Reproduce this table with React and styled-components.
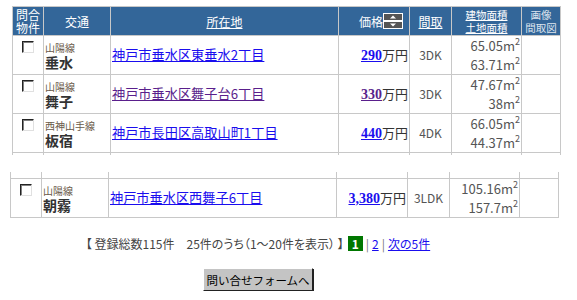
import React from "react";
import styled, { createGlobalStyle } from "styled-components";

const GlobalStyle = createGlobalStyle`
  body {
    margin: 0;
    background: #fff;
    font-family: "Noto Sans CJK JP", "Noto Sans", sans-serif;
  }
`;

const COLS = [31, 67, 228, 71, 42, 70, 39];

const listings = [
  { line: "山陽線", station: "垂水", address: "神戸市垂水区東垂水2丁目", price: "290", madori: "3DK", building: "65.05", land: "63.71" },
  { line: "山陽線", station: "舞子", address: "神戸市垂水区舞子台6丁目", price: "330", madori: "3DK", building: "47.67", land: "38", visited: true },
  { line: "西神山手線", station: "板宿", address: "神戸市長田区高取山町1丁目", price: "440", madori: "4DK", building: "66.05", land: "44.37" },
];

const lastListing = { line: "山陽線", station: "朝霧", address: "神戸市垂水区西舞子6丁目", price: "3,380", madori: "3LDK", building: "105.16", land: "157.7" };

export default function App() {
  return (
    <Page>
      <GlobalStyle />
      <Table>
        <Cols />
        <thead>
          <tr>
            <Th>問合<br />物件</Th>
            <Th>交通</Th>
            <Th><HeadLink>所在地</HeadLink></Th>
            <Th>
              <PriceHead>
                価格
                <SortIcon />
              </PriceHead>
            </Th>
            <Th><HeadLink>間取</HeadLink></Th>
            <Th $small><HeadLink>建物面積</HeadLink><br /><HeadLink>土地面積</HeadLink></Th>
            <Th $small $dim>画像<br />間取図</Th>
          </tr>
        </thead>
        <tbody>
          {listings.map((item) => (
            <ListingRow key={item.address} item={item} />
          ))}
          <SliverRow />
        </tbody>
      </Table>

      <LowerTable>
        <Cols />
        <tbody>
          <SliverRow clipped="100.00m" />
          <ListingRow item={lastListing} />
        </tbody>
      </LowerTable>

      <Footer>
        <Pager>
          【 登録総数115件　25件のうち（1～20件を表示） 】
          <Current>1</Current>
          <Sep>|</Sep>
          <PageLink href="#">2</PageLink>
          <Sep>|</Sep>
          <PageLink href="#">次の5件</PageLink>
        </Pager>
        <FormButton type="button">問い合せフォームへ</FormButton>
      </Footer>
    </Page>
  );
}

function Cols() {
  return (
    <colgroup>
      {COLS.map((w, i) => (
        <col key={i} style={{ width: w }} />
      ))}
    </colgroup>
  );
}

function ListingRow({ item }) {
  return (
    <tr>
      <CheckCell>
        <CheckBox />
      </CheckCell>
      <Td>
        <LineName>{item.line}</LineName>
        <Station>{item.station}</Station>
      </Td>
      <Td>
        <AddressLink href="#" $visited={item.visited}>{item.address}</AddressLink>
      </Td>
      <PriceCell>
        <PriceLink href="#" $visited={item.visited}>{item.price}</PriceLink>万円
      </PriceCell>
      <MadoriCell>{item.madori}</MadoriCell>
      <AreaCell>
        <AreaLine>{item.building}m<Sup>2</Sup></AreaLine>
        <AreaLine>{item.land}m<Sup>2</Sup></AreaLine>
      </AreaCell>
      <Td />
    </tr>
  );
}

function SliverRow({ clipped }) {
  return (
    <tr>
      {COLS.map((_, i) => (
        <SliverCell key={i} $h={clipped ? 6 : 2}>
          {clipped && i === 5 && (
            <Clip>
              <ClipText>{clipped}</ClipText>
            </Clip>
          )}
        </SliverCell>
      ))}
    </tr>
  );
}

function SortIcon() {
  return (
    <svg width="20" height="16" viewBox="0 0 20 16">
      <rect x="0.5" y="0.5" width="19" height="7" fill="#555" stroke="#fff" />
      <polygon points="7,5.5 13,5.5 10,2.5" fill="#fff" />
      <rect x="0.5" y="8.5" width="19" height="7" fill="#555" stroke="#fff" />
      <polygon points="7,10.5 13,10.5 10,13.5" fill="#fff" />
    </svg>
  );
}

const Page = styled.div`
  padding: 6px 0 0 12px;
  width: 549px;
`;

const Table = styled.table`
  border-collapse: collapse;
  table-layout: fixed;
  width: 549px;
`;

const LowerTable = styled(Table)`
  margin-top: 17px;
  margin-left: -2px;
`;

const Th = styled.th`
  background: #336699;
  color: ${(p) => (p.$dim ? "#dde4ee" : "#fff")};
  border: 1px solid #c8c8c8;
  font-weight: normal;
  font-size: ${(p) => (p.$small ? "10.5px" : "12px")};
  line-height: 13px;
  height: 28px;
  padding: 0;
  text-align: center;
  vertical-align: middle;
`;

const HeadLink = styled.span`
  text-decoration: underline;
`;

const PriceHead = styled.span`
  display: inline-flex;
  align-items: center;
  margin-left: 14px;
`;

const Td = styled.td`
  border: 1px solid #c8c8c8;
  height: 38px;
  padding: 0 0 0 1px;
  vertical-align: middle;
  font-size: 13px;
  line-height: 18px;
  color: #333;
`;

const CheckCell = styled(Td)`
  vertical-align: top;
  padding: 0;
`;

const CheckBox = styled.span`
  display: block;
  margin: 5px auto 0;
  width: 10px;
  height: 10px;
  border: 1px solid;
  border-color: #222 #e0e0e0 #e0e0e0 #222;
  box-shadow: inset 1px 1px 0 #808080;
  background: #fff;
`;

const LineName = styled.div`
  font-size: 10px;
  line-height: 13px;
  color: #6a5a4a;
`;

const Station = styled.div`
  font-size: 14px;
  line-height: 16px;
  font-weight: bold;
  color: #333;
`;

const AddressLink = styled.a`
  color: ${(p) => (p.$visited ? "#5a1f8c" : "#1a0dee")};
  text-decoration: underline;
  font-size: 13.2px;
`;

const PriceCell = styled(Td)`
  text-align: right;
  padding: 0 1px 0 0;
  white-space: nowrap;
`;

const PriceLink = styled.a`
  color: ${(p) => (p.$visited ? "#5a1f8c" : "#1a0dee")};
  font-family: "Liberation Serif", serif;
  font-weight: bold;
  font-size: 14px;
  text-decoration: underline;
`;

const MadoriCell = styled(Td)`
  text-align: center;
  font-size: 12px;
  color: #555;
  padding: 0;
`;

const AreaCell = styled(Td)`
  text-align: right;
  padding: 0 1px 0 0;
  color: #555;
`;

const AreaLine = styled.div`
  font-size: 13px;
  line-height: 19px;
  height: 19px;
`;

const Sup = styled.span`
  font-size: 9px;
  position: relative;
  top: -6px;
`;

const SliverCell = styled.td`
  border-left: 1px solid #c8c8c8;
  border-right: 1px solid #c8c8c8;
  height: ${(p) => p.$h}px;
  padding: 0;
`;

const Clip = styled.div`
  height: 6px;
  overflow: hidden;
  text-align: right;
  padding-right: 12px;
`;

const ClipText = styled.div`
  font-size: 13px;
  line-height: 19px;
  color: #555;
  margin-top: -15px;
`;

const Footer = styled.div`
  width: 492px;
  text-align: center;
  padding-top: 17px;
`;

const Pager = styled.div`
  font-size: 12px;
  line-height: 17px;
  color: #444;
  white-space: nowrap;
  font-feature-settings: "palt";
`;

const Current = styled.span`
  display: inline-block;
  background: #007700;
  color: #fff;
  font-weight: bold;
  padding: 0 4px;
  line-height: 15px;
  margin-left: 4px;
`;

const Sep = styled.span`
  color: #777;
  margin: 0 3px;
`;

const PageLink = styled.a`
  color: #1a0dee;
  text-decoration: underline;
`;

const FormButton = styled.button`
  margin-top: 16px;
  font-family: "Noto Sans CJK JP", sans-serif;
  font-size: 11.5px;
  line-height: 18px;
  height: 23px;
  padding: 0 2px;
  background: #c4c4c4;
  color: #000;
  border: 1px solid;
  border-color: #fff #222 #222 #fff;
  box-shadow: 1px 1px 0 #222;
`;
